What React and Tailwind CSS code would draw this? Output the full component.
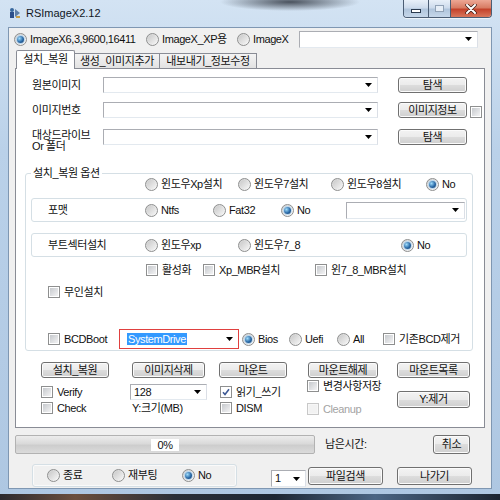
import React from "react";

const FONT = "font-[family-name:'Liberation_Sans','Noto_Sans_CJK_KR',sans-serif]";

function Radio({ checked = false, label }) {
  return (
    <div className="flex items-center gap-[3px] whitespace-nowrap">
      <span className="flex h-[13px] w-[13px] shrink-0 items-center justify-center rounded-full border border-[#8e8f8f] bg-[linear-gradient(135deg,#d0d0d0,#fafafa)]">
        {checked ? (
          <span className="h-[7px] w-[7px] rounded-full bg-[radial-gradient(circle_at_35%_35%,#9fdcfb,#2a6aa8_55%,#123a66)] shadow-[0_0_0_1px_#b9d6ee]" />
        ) : (
          <span className="h-[9px] w-[9px] rounded-full bg-[linear-gradient(135deg,#c9c9c9,#f5f5f5)]" />
        )}
      </span>
      <span>{label}</span>
    </div>
  );
}

function Check({ checked = false, disabled = false, label }) {
  return (
    <div
      className={
        disabled
          ? "flex items-center gap-[4px] whitespace-nowrap text-[#a3a3a3]"
          : "flex items-center gap-[4px] whitespace-nowrap"
      }
    >
      <span
        className={
          disabled
            ? "flex h-[12px] w-[12px] shrink-0 items-center justify-center border border-[#c8c8c8] bg-[#f7f7f7]"
            : "flex h-[12px] w-[12px] shrink-0 items-center justify-center border border-[#8e8f8f] bg-white"
        }
      >
        {checked ? (
          <svg width="8" height="8" viewBox="0 0 8 8">
            <path d="M1 4.2 L3 6.5 L7 1.2" fill="none" stroke="#3d5894" strokeWidth="1.6" />
          </svg>
        ) : (
          <span
            className={
              disabled
                ? "h-[8px] w-[8px] bg-[#f2f2f2]"
                : "h-[8px] w-[8px] bg-[linear-gradient(135deg,#c6c9cd,#f3f3f4)]"
            }
          />
        )}
      </span>
      {label ? <span>{label}</span> : null}
    </div>
  );
}

function Arrow() {
  return (
    <svg width="7" height="4" viewBox="0 0 7 4" className="shrink-0">
      <path d="M0 0 H7 L3.5 4 Z" fill="#000" />
    </svg>
  );
}

function Combo({ className, children }) {
  return (
    <div
      className={
        "flex items-center justify-between border border-[#abadb3] border-b-[#e3e9ef] border-r-[#dbdfe6] bg-white pl-[3px] pr-[5px] " +
        className
      }
    >
      <span className="whitespace-nowrap">{children}</span>
      <Arrow />
    </div>
  );
}

function Btn({ className, children }) {
  return (
    <div
      className={
        "flex items-center justify-center whitespace-nowrap rounded-[3px] border border-[#707070] bg-[linear-gradient(#f3f3f3,#ebebeb_50%,#dddddd_50%,#cfcfcf)] shadow-[inset_0_0_0_1px_#fbfbfb] " +
        className
      }
    >
      {children}
    </div>
  );
}

function TitleIcon() {
  return (
    <svg width="12" height="12" viewBox="0 0 12 12">
      <rect x="1" y="5" width="4" height="6" fill="#2d4f8a" />
      <circle cx="3" cy="3" r="2" fill="#39689e" />
      <path d="M6 2 L11 6 L6 10 Z" fill="#5f7fa8" />
      <rect x="7" y="9" width="4" height="2" fill="#c9a04a" />
    </svg>
  );
}

export default function App() {
  return (
    <div
      className={
        "h-[500px] w-[500px] overflow-hidden bg-[radial-gradient(ellipse_70px_9px_at_290px_2px,rgba(40,46,56,0.8),transparent),linear-gradient(180deg,#d3e3f3,#bad1e9_30%,#aec7e2)] text-[11px] leading-[13px] tracking-[-0.4px] text-[#111] " +
        FONT
      }
    >
      {/* title bar */}
      <div className="flex h-[28px] items-start">
        <div className="flex h-[26px] items-center pl-[9px]">
          <TitleIcon />
          <span className="ml-[5px] text-[11px] tracking-normal text-[#10161e]">RSImageX2.12</span>
        </div>
        <div className="ml-auto mr-[8px] flex h-[18px] overflow-hidden rounded-b-[4px] border border-t-0 border-[#4b5d74] shadow-[0_1px_0_rgba(255,255,255,0.6)]">
          <div className="flex w-[25px] items-center justify-center border-r border-[#4b5d74] bg-[linear-gradient(#e8f0f9,#cddbec_45%,#b0c5dc_55%,#c6d7ea)]">
            <span className="mt-[5px] h-[4px] w-[10px] border border-[#2a3a4e] bg-white" />
          </div>
          <div className="flex w-[22px] items-center justify-center border-r border-[#4b5d74] bg-[linear-gradient(#e8f0f9,#cddbec_45%,#b0c5dc_55%,#c6d7ea)]">
            <span className="h-[7px] w-[9px] border border-[#91a2b6] bg-[#e6eef7]" />
          </div>
          <div className="flex w-[40px] items-center justify-center bg-[linear-gradient(#eda795,#d87c64_45%,#c4422b_55%,#d9775c)]">
            <svg width="12" height="10" viewBox="0 0 12 10">
              <path d="M2 1 L10 9 M10 1 L2 9" stroke="#3b1a14" strokeWidth="3.4" strokeLinecap="round" />
              <path d="M2 1 L10 9 M10 1 L2 9" stroke="#ffffff" strokeWidth="2" strokeLinecap="round" />
            </svg>
          </div>
        </div>
      </div>

      {/* client area */}
      <div className="ml-[9px] flex h-[460px] w-[482px] flex-col bg-[#f0f0f0] shadow-[0_0_0_1px_#7f97b2]">
        {/* row 1 */}
        <div className="mt-[2px] flex h-[18px] items-center pl-[5px]">
          <div className="w-[132px]">
            <Radio checked label="ImageX6,3,9600,16411" />
          </div>
          <div className="w-[91px]">
            <Radio label="ImageX_XP용" />
          </div>
          <div className="w-[62px]">
            <Radio label="ImageX" />
          </div>
          <Combo className="h-[17px] w-[179px]" />
        </div>

        {/* tabs */}
        <div className="relative z-10 mb-[-1px] mt-[2px] flex h-[19px] items-end pl-[7px]">
          <div className="flex h-[19px] w-[59px] items-center justify-center rounded-t-[2px] border border-b-0 border-[#898c95] bg-white pb-[1px]">
            설치_복원
          </div>
          <div className="flex h-[16px] w-[85px] items-center justify-center border border-l-0 border-[#898c95] bg-[linear-gradient(#f4f4f4,#e2e2e2)]">
            생성_이미지추가
          </div>
          <div className="flex h-[16px] w-[97px] items-center justify-center border border-l-0 border-[#898c95] bg-[linear-gradient(#f4f4f4,#e2e2e2)]">
            내보내기_정보수정
          </div>
        </div>

        {/* tab panel */}
        <div className="ml-[6px] flex h-[360px] w-[470px] flex-col border border-[#898c95] bg-white">
          {/* row A */}
          <div className="mt-[8px] flex h-[16px] items-center pl-[16px]">
            <div className="w-[71px]">원본이미지</div>
            <Combo className="h-[16px] w-[275px]" />
            <Btn className="ml-[20px] h-[16px] w-[69px]">탐색</Btn>
          </div>
          {/* row B */}
          <div className="mt-[9px] flex h-[16px] items-center pl-[16px]">
            <div className="w-[71px]">이미지번호</div>
            <Combo className="h-[16px] w-[275px]" />
            <Btn className="ml-[20px] h-[16px] w-[69px]">이미지정보</Btn>
            <div className="ml-[3px] mt-[4px]">
              <Check />
            </div>
          </div>
          {/* row C */}
          <div className="mt-[11px] flex items-start pl-[16px]">
            <div className="mt-[1px] w-[71px] leading-[11px]">
              <div>대상드라이브</div>
              <div>Or 폴더</div>
            </div>
            <Combo className="h-[16px] w-[275px]" />
            <Btn className="ml-[20px] h-[16px] w-[69px]">탐색</Btn>
          </div>

          {/* group box */}
          <fieldset className="ml-[9px] mt-[15px] w-[448px] rounded-[3px] border border-[#d5dfe5] pb-[1px]">
            <legend className="ml-[5px] px-[2px] leading-[12px]">설치_복원 옵션</legend>
            <div className="-mt-[1px] flex h-[12px] items-center pl-[119px]">
              <div className="w-[93px]">
                <Radio label="윈도우Xp설치" />
              </div>
              <div className="w-[93px]">
                <Radio label="윈도우7설치" />
              </div>
              <div className="w-[95px]">
                <Radio label="윈도우8설치" />
              </div>
              <Radio checked label="No" />
            </div>

            <div className="ml-[5px] mt-[8px] flex h-[24px] w-[436px] items-center rounded-[3px] border border-[#d5dfe5] pl-[16px]">
              <div className="w-[97px]">포맷</div>
              <div className="w-[68px]">
                <Radio label="Ntfs" />
              </div>
              <div className="w-[68px]">
                <Radio label="Fat32" />
              </div>
              <div className="w-[65px]">
                <Radio checked label="No" />
              </div>
              <Combo className="h-[17px] w-[119px]" />
            </div>

            <div className="ml-[5px] mt-[11px] flex h-[24px] w-[436px] items-center rounded-[3px] border border-[#d5dfe5] pl-[16px]">
              <div className="w-[97px]">부트섹터설치</div>
              <div className="w-[93px]">
                <Radio label="윈도우xp" />
              </div>
              <div className="w-[163px]">
                <Radio label="윈도우7_8" />
              </div>
              <Radio checked label="No" />
            </div>

            <div className="mt-[6px] flex h-[14px] items-center pl-[120px]">
              <div className="w-[57px]">
                <Check label="활성화" />
              </div>
              <div className="w-[112px]">
                <Check label="Xp_MBR설치" />
              </div>
              <Check label="윈7_8_MBR설치" />
            </div>

            <div className="mt-[8px] flex h-[14px] items-center pl-[22px]">
              <Check label="무인설치" />
            </div>

            <div className="mt-[30px] flex h-[20px] items-center pl-[22px]">
              <div className="w-[71px]">
                <Check label="BCDBoot" />
              </div>
              <div className="flex h-[20px] w-[120px] items-center justify-between border border-[#e0403f] bg-white pl-[7px] pr-[5px]">
                <span className="bg-[#3399ff] px-[1px] leading-[12px] text-white">SystemDrive</span>
                <Arrow />
              </div>
              <div className="ml-[3px] w-[47px]">
                <Radio checked label="Bios" />
              </div>
              <div className="w-[48px]">
                <Radio label="Uefi" />
              </div>
              <div className="w-[46px]">
                <Radio label="All" />
              </div>
              <Check label="기존BCD제거" />
            </div>
          </fieldset>

          {/* buttons row */}
          <div className="mt-[11px] flex h-[16px] pl-[25px]">
            <Btn className="h-[16px] w-[68px]">설치_복원</Btn>
            <Btn className="ml-[23px] h-[16px] w-[73px]">이미지삭제</Btn>
            <Btn className="ml-[14px] h-[16px] w-[68px]">마운트</Btn>
            <Btn className="ml-[21px] h-[16px] w-[70px]">마운트해제</Btn>
            <Btn className="ml-[19px] h-[16px] w-[73px]">마운트목록</Btn>
          </div>

          {/* lower section */}
          <div className="flex pl-[25px]">
            <div className="flex w-[89px] flex-col gap-[2px] pt-[7px]">
              <div className="flex h-[14px] items-center">
                <Check label="Verify" />
              </div>
              <div className="flex h-[14px] items-center">
                <Check label="Check" />
              </div>
            </div>
            <div className="flex w-[90px] flex-col">
              <Combo className="mt-[6px] h-[16px] w-[77px]">128</Combo>
              <div className="mt-[1px] flex h-[14px] items-center pl-[2px]">Y:크기(MB)</div>
            </div>
            <div className="flex w-[87px] flex-col gap-[2px] pt-[7px]">
              <div className="flex h-[14px] items-center">
                <Check checked label="읽기_쓰기" />
              </div>
              <div className="flex h-[14px] items-center">
                <Check label="DISM" />
              </div>
            </div>
            <div className="flex w-[90px] flex-col pt-[1px]">
              <div className="flex h-[14px] items-center">
                <Check label="변경사항저장" />
              </div>
              <div className="mt-[9px] flex h-[14px] items-center">
                <Check disabled label="Cleanup" />
              </div>
            </div>
            <Btn className="mt-[13px] h-[17px] w-[73px]">Y:제거</Btn>
          </div>
        </div>

        {/* progress row */}
        <div className="mt-[7px] flex h-[19px] items-center">
          <div className="ml-[6px] flex h-[19px] w-[300px] items-center justify-center rounded-[2px] border border-[#b2b2b2] bg-[linear-gradient(#ececec,#dadada_45%,#cdcdcd_55%,#dbdbdb)]">
            <span className="bg-white px-[6px] leading-[12px]">0%</span>
          </div>
          <div className="ml-[10px] w-[108px]">남은시간:</div>
          <Btn className="h-[19px] w-[37px]">취소</Btn>
        </div>

        {/* bottom row */}
        <div className="mt-[10px] flex items-start">
          <div className="ml-[23px] flex h-[23px] w-[205px] items-center rounded-[3px] border border-[#d5dfe5] pl-[14px] shadow-[inset_0_0_0_1px_#fafafa]">
            <div className="w-[65px]">
              <Radio label="종료" />
            </div>
            <div className="w-[70px]">
              <Radio label="재부팅" />
            </div>
            <Radio checked label="No" />
          </div>
          <Combo className="ml-[34px] mt-[6px] h-[17px] w-[35px]">1</Combo>
          <Btn className="ml-[2px] mt-[3px] h-[18px] w-[75px]">파일검색</Btn>
          <Btn className="ml-[14px] mt-[3px] h-[18px] w-[75px]">나가기</Btn>
        </div>
      </div>

      {/* bottom frame / taskbar */}
      <div className="mt-[6px] h-[6px] bg-[linear-gradient(90deg,#2c2a2e,#6b4e3c_15%,#2a2f38_35%,#1d2633_55%,#4b6584_75%,#1b2430)]" />
    </div>
  );
}
